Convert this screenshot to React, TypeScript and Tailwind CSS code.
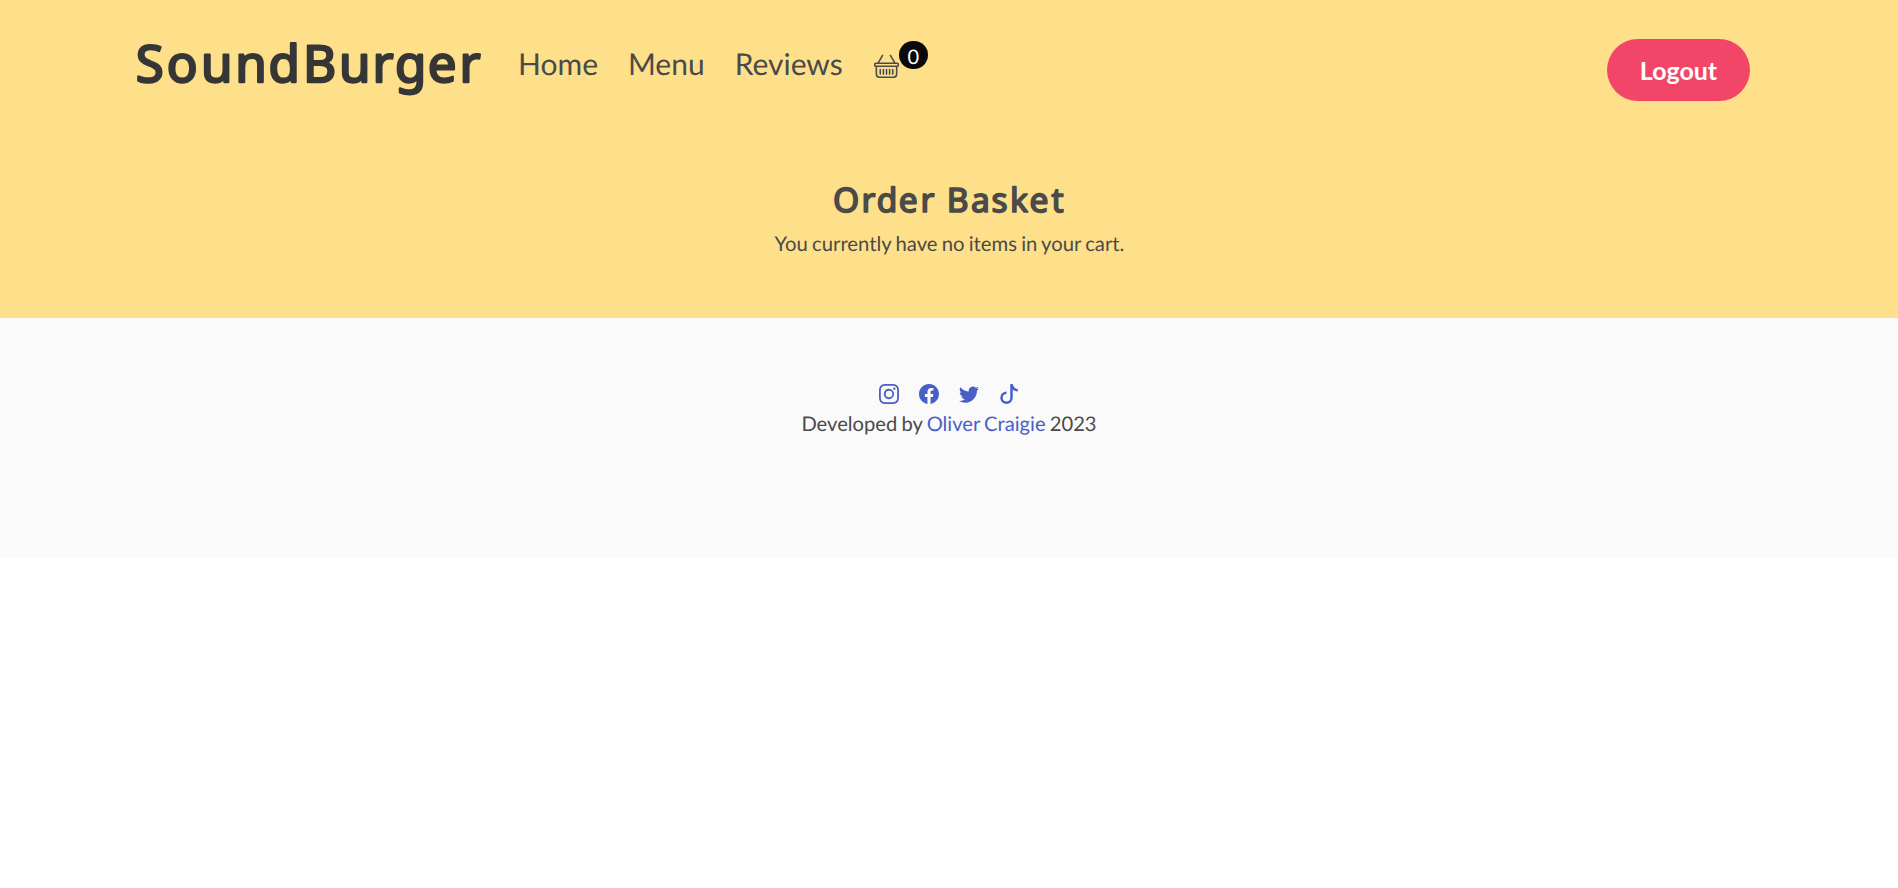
import { BsBasket, BsInstagram, BsFacebook, BsTwitter, BsTiktok } from "react-icons/bs";

const links = ["Home", "Menu", "Reviews"];

function Wordmark() {
  return (
    <svg width="383" height="72" className="overflow-visible font-['Noto_Sans',sans-serif] text-[51px] font-normal" fill="#363636" stroke="#363636" strokeWidth="2.4" strokeLinejoin="round">
      <text y="55" x="0.7 31.8 66 100.2 133.5 167.9 204 237.5 260.1 292.8 324.5">SoundBurger</text>
    </svg>
  );
}

function BasketTitle() {
  return (
    <svg width="240" height="48" className="overflow-visible font-['Noto_Sans',sans-serif] text-[33.5px] font-normal" fill="#4a4a4a" stroke="#4a4a4a" strokeWidth="1.7" strokeLinejoin="round">
      <text y="37.5" x="4 32.6 47.7 69.7 91.6 106 117.7 142 162.5 181.1 200.5 222.4">Order Basket</text>
    </svg>
  );
}

export default function App() {
  return (
    <div className="min-h-[888px] bg-white font-['Lato',sans-serif] text-[#4a4a4a] [text-rendering:geometricPrecision]">
      <div className="h-[318px] bg-[#ffe08a]">
        <nav className="flex h-[136px] items-start pl-[135px] pr-[148px]">
          <h1 className="mt-[27px] w-[383px]"><Wordmark /></h1>
          <div className="mt-[40px] flex gap-[30px] text-[30px] leading-[48px]">
            {links.map((l) => <a key={l}>{l}</a>)}
          </div>
          <div className="mt-[41px] ml-[31px] flex">
            <BsBasket className="mt-[12px]" size={25} />
            <span className="h-7 w-[29px] rounded-full bg-[#0a0a0a] pt-px text-center text-xl leading-[30px] text-white">0</span>
          </div>
          <button className="mt-[39px] ml-auto h-[62px] w-[143px] rounded-full bg-[#f14668] pt-[2px] text-[25px] font-bold text-white">Logout</button>
        </nav>
        <h2 className="mt-[38px] flex justify-center"><BasketTitle /></h2>
        <p className="mt-[6.5px] pl-px text-center text-[20.3px] leading-[30px] [word-spacing:-1px]">You currently have no items in your cart.</p>
      </div>
      <footer className="h-[240px] bg-[#fafafa] pt-[66px] text-center text-[20px]">
        <div className="flex justify-center gap-5 text-[#485fc7]">
          <BsInstagram /><BsFacebook /><BsTwitter /><BsTiktok />
        </div>
        <p className="mt-[4.5px] text-[20.2px] leading-[30px] [word-spacing:-1px]">Developed by <a className="text-[#485fc7]">Oliver Craigie</a> 2023</p>
      </footer>
    </div>
  );
}
